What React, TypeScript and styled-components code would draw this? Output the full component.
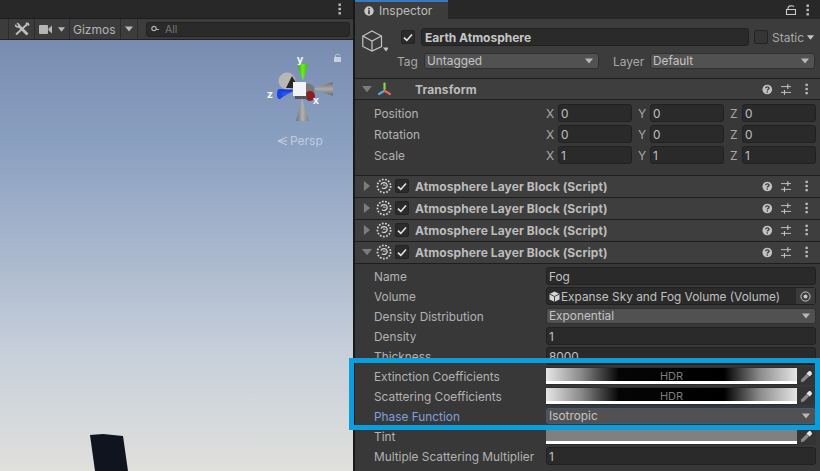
import React from 'react';
import styled, { createGlobalStyle } from 'styled-components';

const Global = createGlobalStyle`
  html, body { margin: 0; padding: 0; background: #191919; }
  * { box-sizing: border-box; }
`;

const Root = styled.div`
  position: relative; width: 820px; height: 471px; overflow: hidden; display: flex;
  font-family: Inter, "Noto Sans", sans-serif; font-size: 12px; color: #b8b8b8; background: #191919;
`;
const ScenePanel = styled.section`
  width: 353px; margin-right: 2px; flex: none; display: flex; flex-direction: column;
`;
const TabStrip = styled.div`
  height: 19px; flex: none; display: flex; align-items: center; justify-content: flex-end;
  background: #282828; border-bottom: 1px solid #1d1d1d; padding-right: 11px;
`;
const SceneToolbar = styled.div`
  height: 21px; flex: none; display: flex; align-items: center; background: #3c3c3c; border-bottom: 1px solid #232323;
  padding-left: 8px; padding-right: 3px;
`;
const ToolCell = styled.div<{ $w: number; $text?: boolean }>`
  width: ${p => p.$w}px; height: 100%; display: flex; align-items: center; gap: 6px;
  justify-content: ${p => (p.$text ? 'flex-start' : 'center')}; padding-left: ${p => (p.$text ? 3 : 0)}px;
  border-left: 1px solid #2c2c2c; color: #b4b4b4; font-size: 12px;
`;
const SearchBox = styled.div`
  margin-left: 8px; flex: 1; height: 15px; border-radius: 3px; background: #2a2a2a; border: 1px solid #222;
  display: flex; align-items: center; gap: 5px; padding-left: 4px; color: #777; font-size: 10.5px;
`;
const Scene = styled.div`
  position: relative; flex: 1; overflow: hidden;
  background: linear-gradient(180deg, #788caf 0%, #8aa0c1 24%, #a7b6cc 48%, #c6cfda 72%, #e0e0dc 100%);
`;
const Overlay = styled.svg`
  position: absolute; left: 0; top: 0; width: 353px; height: 431px;
`;
const PerspLabel = styled.div`
  position: absolute; left: 277px; top: 93px; display: flex; align-items: center; gap: 1px;
  color: #d0d7e2; font-size: 12px; opacity: .8;
`;

const Inspector = styled.section`
  width: 465px; flex: none; display: flex; flex-direction: column; background: #383838;
`;
const InspectorTabs = styled.div`
  height: 19px; flex: none; display: flex; align-items: stretch; justify-content: space-between; background: #282828;
`;
const ActiveTab = styled.div`
  width: 93px; display: flex; align-items: center; gap: 5px; padding-left: 9px; background: #3c3c3c;
  border-top: 2px solid #3a79bb; color: #bdbdbd; font-size: 12px;
`;
const TabIcons = styled.div`
  display: flex; align-items: center; gap: 9px; padding-right: 10px;
`;
const ObjectHeader = styled.div`
  height: 60px; flex: none; background: #3c3c3c; border-bottom: 1px solid #1e1e1e; position: relative;
  display: flex; padding: 9px 5px 0 7px;
`;
const CubeWrap = styled.div`
  width: 39px; flex: none; padding-top: 2px;
`;
const HeaderStack = styled.div`
  flex: 1; display: flex; flex-direction: column; gap: 7px;
`;
const NameRow = styled.div`
  display: flex; align-items: center; height: 18px;
`;
const TagRow = styled.div`
  display: flex; align-items: center; height: 16px; margin-left: -4px;
`;
const Check = styled.div<{ $off?: boolean; $gap?: number }>`
  width: 14px; height: 14px; flex: none; border-radius: 2px; border: 1px solid #232323;
  background: ${p => (p.$off ? '#353535' : '#2b2b2b')}; margin-left: ${p => p.$gap ?? 0}px;
  display: flex; align-items: center; justify-content: center;
`;
const NameField = styled.div`
  width: 328px; height: 18px; margin-left: 6px; flex: none; background: #2a2a2a; border: 1px solid #212121; border-radius: 3px;
  padding-left: 3px; line-height: 17px; font-weight: 700; color: #c6c6c6; font-size: 12px;
`;
const StaticLabel = styled.div`
  margin-left: 4px; color: #a8a8a8; font-size: 12px; display: flex; align-items: center; gap: 3px;
`;
const SmallLabel = styled.div<{ $w: number; $gap?: number }>`
  width: ${p => p.$w}px; flex: none; color: #a8a8a8; font-size: 12px; margin-left: ${p => p.$gap ?? 0}px;
`;
const Dropdown = styled.div<{ $focus?: boolean; $w?: number }>`
  height: 16px; margin-top: ${p => (p.$w ? 0 : 1)}px; min-width: 0; border-radius: 3px; background: #515151;
  ${p => (p.$w ? `width: ${p.$w}px; flex: none;` : 'flex: 1;')}
  border: 1px solid ${p => (p.$focus ? '#3f5a80' : '#303030')};
  display: flex; align-items: center; justify-content: space-between; padding: 0 5px 1px 2px; color: #c4c4c4; font-size: 11.85px;
`;
const ComponentHeader = styled.div<{ $h?: number }>`
  height: ${p => p.$h ?? 22}px; flex: none; display: flex; align-items: center; background: #3e3e3e; border-bottom: 1px solid #1e1e1e;
  padding-left: 6px; padding-bottom: ${p => (p.$h ? 0 : 1)}px; position: relative;
`;
const Foldout = styled.div`
  width: 12px; flex: none; display: flex; align-items: center; justify-content: center;
`;
const ComponentIcon = styled.div`
  width: 16px; height: 16px; margin-left: 3px; flex: none; display: flex; align-items: center; justify-content: center;
`;
const ComponentCheck = styled.div`
  margin-left: 3px; flex: none;
`;
const ComponentTitle = styled.div<{ $indent: number }>`
  margin-left: ${p => p.$indent}px; flex: 1; font-weight: 700; color: #bcbcbc; font-size: 12px; white-space: nowrap; letter-spacing: .09px;
`;
const HeaderActions = styled.div`
  width: 47px; flex: none; display: flex; align-items: center; gap: 8px; margin-right: 11px;
  & > :last-child { margin-left: 6px; }
`;
const TransformBody = styled.div`
  height: 76px; flex: none; padding-top: 4px; border-bottom: 1px solid #1e1e1e; display: flex; flex-direction: column; gap: 2.8px;
`;
const Row = styled.div`
  height: 20px; flex: none; display: flex; align-items: flex-start; padding: 0 4px 0 19px;
`;
const TRow = styled(Row)`
  height: 18px;
`;
const RowLabel = styled.div<{ $blue?: boolean }>`
  width: 172px; height: 18px; flex: none; line-height: 20px; white-space: nowrap; font-size: 11.85px;
  color: ${p => (p.$blue ? '#7ba2dc' : '#b2b2b2')};
`;
const Axis = styled.div`
  flex: 1; display: flex; align-items: center; min-width: 0;
  & + & { margin-left: 6px; }
`;
const AxisName = styled.div`
  width: 12px; flex: none; color: #a8a8a8; font-size: 12px; padding-top: 1px;
`;
const Field = styled.div`
  flex: 1; height: 18px; min-width: 0; background: #2a2a2a; border: 1px solid #212121; border-radius: 3px;
  padding: 2px 0 0 2px; line-height: 14px; color: #c0c0c0; font-size: 11.85px; white-space: nowrap;
  display: flex; align-items: center; justify-content: space-between;
`;
const ObjectField = styled(Field)`
  padding-right: 0;
`;
const ObjectGlyph = styled.svg`
  margin-right: 1px; vertical-align: -1px;
`;
const TargetBtn = styled.div`
  width: 19px; height: 16px; margin-top: -2px; background: #3a3a3a; display: flex; align-items: center; justify-content: center; flex: none;
`;
const GradientWrap = styled.div`
  flex: 1; height: 18px; display: flex; background: #2c2c2c;
`;
const Swatch = styled.div<{ $kind: 'hdr' | 'flat' }>`
  flex: 1; margin-top: 1px; height: 16px; border-bottom: 3px solid #fff; position: relative;
  display: flex; align-items: flex-end; justify-content: center; color: #7c7c7c; font-size: 11px; line-height: 10px;
  background: ${p => (p.$kind === 'hdr'
    ? 'linear-gradient(90deg,#e6e6e6 0%,#8a8a8a 14%,#050505 29%,#000 71%,#8a8a8a 85%,#e6e6e6 100%)'
    : '#808080')};
`;
const PickerBtn = styled.div`
  width: 19px; flex: none; display: flex; align-items: center; justify-content: center; background: #343434;
`;
const Body = styled.div`
  flex: 1; padding-top: 3px; display: flex; flex-direction: column;
`;
const Highlight = styled.div`
  position: absolute; left: 349px; top: 358px; width: 471px; height: 72px; border: 5px solid #0b9edd; pointer-events: none;
`;

const Tri = ({ c = '#b8b8b8', w = 8, dir = 'down' }: { c?: string; w?: number; dir?: 'down' | 'right' }) => (
  <svg width={w} height={w} viewBox="0 0 8 8">
    <path d={dir === 'down' ? 'M0 1.5H8L4 6.5Z' : 'M1.5 0V8L6.5 4Z'} fill={c} />
  </svg>
);
const Dots = ({ c = '#bdbdbd' }: { c?: string }) => (
  <svg width="4" height="12" viewBox="0 0 4 12">
    <rect x="0.5" y="0.5" width="2.4" height="2.4" fill={c} />
    <rect x="0.5" y="4.8" width="2.4" height="2.4" fill={c} />
    <rect x="0.5" y="9.1" width="2.4" height="2.4" fill={c} />
  </svg>
);
const Lock = () => (
  <svg width="12" height="10" viewBox="0 0 12 10" fill="none" stroke="#c8c8c8" strokeWidth="1.1">
    <path d="M3 4.5V3C3 .6 8 .2 9 1.8" />
    <rect x="1.5" y="4.5" width="9" height="5" />
  </svg>
);
const Tick = () => (
  <svg width="10" height="9" viewBox="0 0 10 9">
    <path d="M1 4.6L3.8 7.4L9 1.4" fill="none" stroke="#e4e4e4" strokeWidth="1.6" />
  </svg>
);
const Help = () => (
  <svg width="11" height="11" viewBox="0 0 11 11">
    <circle cx="5.5" cy="5.5" r="5" fill="#c2c2c2" />
    <path d="M3.7 4.2C3.8 2.2 7.4 2.2 7.3 4.2C7.3 5.4 5.5 5.4 5.5 6.6" fill="none" stroke="#3e3e3e" strokeWidth="1.4" />
    <rect x="4.8" y="7.4" width="1.4" height="1.4" fill="#3e3e3e" />
  </svg>
);
const Sliders = () => (
  <svg width="11" height="11" viewBox="0 0 11 11" fill="#c2c2c2">
    <rect x="0" y="2" width="11" height="1" />
    <rect x="6.5" y="0" width="1.2" height="5" />
    <rect x="0" y="8" width="11" height="1" />
    <rect x="3" y="6" width="1.2" height="5" />
  </svg>
);
const Actions = () => (
  <HeaderActions>
    <Help />
    <Sliders />
    <Dots />
  </HeaderActions>
);
const ScriptIcon = () => (
  <svg width="16" height="16" viewBox="0 0 16 16" fill="none" stroke="#d8d8d8">
    <circle cx="8" cy="8" r="6.6" strokeWidth="1.7" strokeDasharray="1.7 1.5" />
    <path d="M5 6.5C6 3.8 10.6 4 11.2 7C11.6 10 8 11.4 5.8 9.8" strokeWidth="1.2" />
    <path d="M7 7.4C8 6.6 9.4 7 9.4 8" strokeWidth="1" />
  </svg>
);
const Eyedropper = () => (
  <svg width="13" height="13" viewBox="0 0 13 13">
    <path d="M.8 12.2L1.4 9.2L6.6 4L9 6.4L3.8 11.6Z" fill="#8c8c8c" />
    <path d="M6.4 3.4L8.6 1.4C10 0 13 3 11.6 4.4L9.6 6.6Z" fill="#e4e4e4" />
  </svg>
);
const CubeIcon = () => (
  <svg width="26" height="26" viewBox="0 0 26 26" fill="none" stroke="#c4c4c4" strokeWidth="1.2">
    <path d="M10 1L19.5 6V16.5L10 21L.8 16.5V6Z" />
    <path d="M.8 6L10 11L19.5 6M10 11V21" />
    <path d="M21 17.5H27L24 21.5Z" fill="#c4c4c4" stroke="none" />
  </svg>
);
const TransformIcon = () => (
  <svg width="15" height="15" viewBox="0 0 15 15" fill="none" strokeWidth="2.2" strokeLinecap="round">
    <path d="M7.5 7V1.5" stroke="#8bd64a" />
    <path d="M7 9L2 12" stroke="#56a8d8" />
    <path d="M8 9L13 12" stroke="#dd6a55" />
  </svg>
);
const ToolsIcon = () => (
  <svg width="16" height="14" viewBox="0 0 16 14" fill="none" stroke="#bdbdbd">
    <path d="M14.5 1L2 12.5" strokeWidth="1.8" />
    <path d="M12 .8L15.2 3.4" strokeWidth="1.6" />
    <path d="M4.5 3.6L13.5 12.5" strokeWidth="2.8" />
    <path d="M1.5 2.6C1.6 4.6 3 5.2 4.6 4.8L5 2.6L3 1.2" strokeWidth="1.6" />
  </svg>
);

const Gizmo = () => (
  <Overlay viewBox="0 0 353 431">
    <defs>
      <linearGradient id="coneH" x1="0" x2="0" y1="0" y2="1">
        <stop offset="0" stopColor="#6c6c6c" />
        <stop offset=".5" stopColor="#ababab" />
        <stop offset="1" stopColor="#6a6a6a" />
      </linearGradient>
      <linearGradient id="coneV" x1="0" x2="1" y1="0" y2="0">
        <stop offset="0" stopColor="#6e6e6e" />
        <stop offset=".5" stopColor="#b0b0b0" />
        <stop offset="1" stopColor="#7e7e7e" />
      </linearGradient>
      <linearGradient id="coneG" x1="0" x2="1" y1="0" y2="0">
        <stop offset="0" stopColor="#2f9c10" />
        <stop offset=".5" stopColor="#66ec22" />
        <stop offset="1" stopColor="#44b818" />
      </linearGradient>
      <linearGradient id="coneB" x1="0" x2="0" y1="0" y2="1">
        <stop offset="0" stopColor="#0c2fd0" />
        <stop offset=".5" stopColor="#2f58ff" />
        <stop offset="1" stopColor="#0a2ab0" />
      </linearGradient>
    </defs>
    <polygon points="90,395 103,394 123,396 128,431 95,431" fill="#10141e" />
    <g transform="translate(0,-40)">
      <circle cx="287" cy="81" r="8.5" fill="#b7b7b7" />
      <polygon points="292,76 299,88 286,88" fill="#262626" />
      <polygon points="312,89 333,82 333,96" fill="url(#coneH)" />
      <circle cx="308" cy="90" r="6.5" fill="#777" />
      <polygon points="302,98 296,121 309,121" fill="url(#coneV)" />
      <circle cx="310" cy="96" r="5" fill="#8e1d1d" />
      <rect x="295" y="94" width="12" height="5" fill="#555" />
      <polygon points="295,90 279,89 279,99" fill="url(#coneB)" />
      <ellipse cx="279.5" cy="94" rx="2.5" ry="5" fill="#1a44e8" />
      <rect x="293" y="82" width="13" height="14" fill="#f1f3f8" />
      <polygon points="297,64 308,64 303,81" fill="url(#coneG)" />
      <text x="300" y="63" fontSize="11" fontWeight="700" fill="#f2f4f8" textAnchor="middle" fontFamily="Inter">y</text>
      <text x="270" y="98" fontSize="11" fontWeight="700" fill="#f2f4f8" textAnchor="middle" fontFamily="Inter">z</text>
      <text x="316" y="104" fontSize="11" fontWeight="700" fill="#f2f4f8" textAnchor="middle" fontFamily="Inter">x</text>
    </g>
    <g transform="translate(333,13)" opacity=".75">
      <path d="M2.5 4V3C2.5 .8 6 .5 7 2.5" fill="none" stroke="#e2e6ee" strokeWidth="1" />
      <rect x="1" y="4" width="7" height="5" fill="#e2e6ee" />
    </g>
  </Overlay>
);

type RowDef = { label: string; blue?: boolean; node: React.ReactNode };

const HdrField = () => (
  <GradientWrap>
    <Swatch $kind="hdr">HDR</Swatch>
    <PickerBtn><Eyedropper /></PickerBtn>
  </GradientWrap>
);

const rows: RowDef[] = [
  { label: 'Name', node: <Field>Fog</Field> },
  {
    label: 'Volume',
    node: (
      <ObjectField>
        <span>
          <ObjectGlyph width="11" height="11" viewBox="0 0 11 11">
            <path d="M5.5 .5L10.5 3V8.5L5.5 10.8L.5 8.5V3Z" fill="#d6d6d6" />
            <path d="M.5 3L5.5 5.5L10.5 3M5.5 5.5V10.8" stroke="#444" fill="none" />
          </ObjectGlyph>
          Expanse Sky and Fog Volume (Volume)
        </span>
        <TargetBtn>
          <svg width="11" height="11" viewBox="0 0 11 11">
            <circle cx="5.5" cy="5.5" r="4.6" fill="none" stroke="#c8c8c8" strokeWidth="1" />
            <circle cx="5.5" cy="5.5" r="2" fill="#c8c8c8" />
          </svg>
        </TargetBtn>
      </ObjectField>
    ),
  },
  { label: 'Density Distribution', node: <Dropdown>Exponential<Tri /></Dropdown> },
  { label: 'Density', node: <Field>1</Field> },
  { label: 'Thickness', node: <Field>8000</Field> },
  { label: 'Extinction Coefficients', node: <HdrField /> },
  { label: 'Scattering Coefficients', node: <HdrField /> },
  { label: 'Phase Function', blue: true, node: <Dropdown $focus>Isotropic<Tri /></Dropdown> },
  {
    label: 'Tint',
    node: (
      <GradientWrap>
        <Swatch $kind="flat" />
        <PickerBtn><Eyedropper /></PickerBtn>
      </GradientWrap>
    ),
  },
  { label: 'Multiple Scattering Multiplier', node: <Field>1</Field> },
];

const BlockHeader = ({ open }: { open?: boolean }) => (
  <ComponentHeader>
    <Foldout><Tri c="#7c7c7c" w={10} dir={open ? 'down' : 'right'} /></Foldout>
    <ComponentIcon><ScriptIcon /></ComponentIcon>
    <ComponentCheck><Check><Tick /></Check></ComponentCheck>
    <ComponentTitle $indent={6}>Atmosphere Layer Block (Script)</ComponentTitle>
    <Actions />
  </ComponentHeader>
);

const TransformRow = ({ label, v }: { label: string; v: string[] }) => (
  <TRow>
    <RowLabel>{label}</RowLabel>
    {['X', 'Y', 'Z'].map((a, i) => (
      <Axis key={a}>
        <AxisName>{a}</AxisName>
        <Field>{v[i]}</Field>
      </Axis>
    ))}
  </TRow>
);

export default function App() {
  return (
    <Root>
      <Global />
      <ScenePanel>
        <TabStrip>
          <Dots />
        </TabStrip>
        <SceneToolbar>
          <ToolCell $w={26}><ToolsIcon /></ToolCell>
          <ToolCell $w={35}>
            <svg width="13" height="9" viewBox="0 0 13 9">
              <rect x="0" y="0" width="9" height="9" rx="1" fill="#b4b4b4" />
              <path d="M9.5 3.5L13 .5V8.5L9.5 5.5Z" fill="#b4b4b4" />
            </svg>
            <Tri w={7} />
          </ToolCell>
          <ToolCell $w={51} $text>Gizmos</ToolCell>
          <ToolCell $w={17}><Tri /></ToolCell>
          <ToolCell $w={0} />
          <SearchBox>
            <svg width="9" height="9" viewBox="0 0 9 9" fill="none" stroke="#b0b0b0">
              <circle cx="3" cy="3.5" r="2.2" strokeWidth="1.2" />
              <path d="M5 4.5H8" />
            </svg>
            All
          </SearchBox>
        </SceneToolbar>
        <Scene>
          <Gizmo />
          <PerspLabel>
            <svg width="12" height="10" viewBox="0 0 12 10" fill="none" stroke="#d8dee8">
              <path d="M10 1L1 5L10 5M1 5L10 9" />
            </svg>
            Persp
          </PerspLabel>
        </Scene>
      </ScenePanel>

      <Inspector>
        <InspectorTabs>
          <ActiveTab>
            <svg width="10" height="10" viewBox="0 0 11 11">
              <circle cx="5.5" cy="5.5" r="5.2" fill="#c8c8c8" />
              <rect x="4.6" y="2" width="1.8" height="1.8" fill="#3c3c3c" />
              <rect x="4.6" y="4.6" width="1.8" height="4.4" fill="#3c3c3c" />
            </svg>
            Inspector
          </ActiveTab>
          <TabIcons>
            <Lock />
            <Dots />
          </TabIcons>
        </InspectorTabs>
        <ObjectHeader>
          <CubeWrap><CubeIcon /></CubeWrap>
          <HeaderStack>
            <NameRow>
              <Check><Tick /></Check>
              <NameField>Earth Atmosphere</NameField>
              <Check $off $gap={5} />
              <StaticLabel>Static<Tri w={7} c="#c8c8c8" /></StaticLabel>
            </NameRow>
            <TagRow>
              <SmallLabel $w={27}>Tag</SmallLabel>
              <Dropdown $w={175}>Untagged<Tri /></Dropdown>
              <SmallLabel $w={37} $gap={14}>Layer</SmallLabel>
              <Dropdown $w={165}>Default<Tri /></Dropdown>
            </TagRow>
          </HeaderStack>
        </ObjectHeader>
        <ComponentHeader $h={21}>
          <Foldout><Tri c="#7c7c7c" w={10} /></Foldout>
          <ComponentIcon><TransformIcon /></ComponentIcon>
          <ComponentTitle $indent={23}>Transform</ComponentTitle>
          <Actions />
        </ComponentHeader>
        <TransformBody>
          <TransformRow label="Position" v={['0', '0', '0']} />
          <TransformRow label="Rotation" v={['0', '0', '0']} />
          <TransformRow label="Scale" v={['1', '1', '1']} />
        </TransformBody>
        <BlockHeader />
        <BlockHeader />
        <BlockHeader />
        <BlockHeader open />
        <Body>
          {rows.map(r => (
            <Row key={r.label}>
              <RowLabel $blue={r.blue}>{r.label}</RowLabel>
              {r.node}
            </Row>
          ))}
        </Body>
      </Inspector>
      <Highlight />
    </Root>
  );
}
